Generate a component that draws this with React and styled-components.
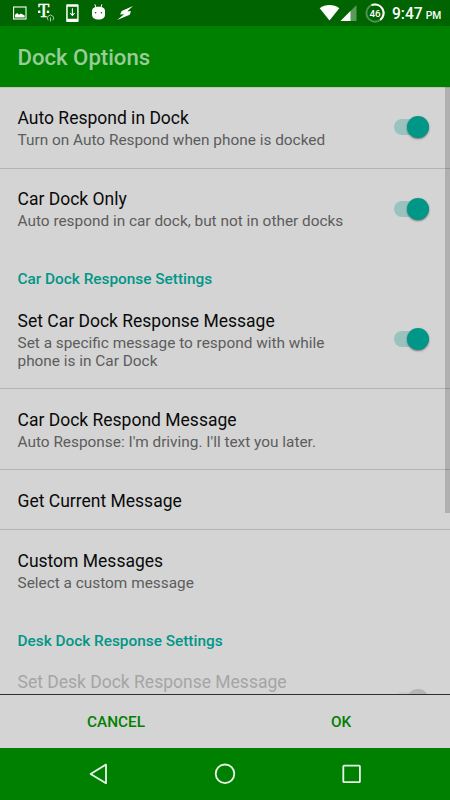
import React from 'react';
import styled, { createGlobalStyle } from 'styled-components';

const GlobalStyle = createGlobalStyle`
  * {
    box-sizing: border-box;
  }
  body {
    margin: 0;
    background: #d4d4d4;
    font-family: Roboto, 'Liberation Sans', sans-serif;
    overflow: hidden;
  }
`;

const Screen = styled.div`
  width: 450px;
  height: 800px;
  display: flex;
  flex-direction: column;
  overflow: hidden;
`;

const StatusBar = styled.header`
  height: 26px;
  flex: none;
  display: flex;
  justify-content: space-between;
  background: #006400;
  color: white;
  svg {
    display: block;
    flex: none;
  }
`;

const Clock = styled.div`
  width: 58px;
  font-size: 15.6px;
  font-weight: 500;
  line-height: 28px;
  white-space: nowrap;
  small {
    font-size: 10.3px;
    margin-left: 3px;
  }
`;

const StatusGroup = styled.div`
  display: flex;
`;

const TitleBar = styled.div`
  height: 61px;
  flex: none;
  padding-left: 17.5px;
  background: #008000;
  color: #99cc99;
  font-size: 22.15px;
  font-weight: 500;
  line-height: 63px;
`;

const ListArea = styled.main`
  position: relative;
  height: 607px;
  flex: none;
  overflow: hidden;
  background: #d4d4d4;
  box-shadow: inset 0 1px 0 #b9c6b9;
`;

const ScrollThumb = styled.div`
  position: absolute;
  top: 0;
  right: 0;
  width: 5px;
  height: 426px;
  background: rgba(0, 0, 0, 0.17);
`;

const Row = styled.div`
  display: flex;
  justify-content: space-between;
  height: ${(props) => props.$height}px;
  padding: ${(props) => props.$top}px 21px 0 17.5px;
  border-bottom: 1px solid ${(props) => (props.$divider ? '#b4b4b4' : 'transparent')};
`;

const RowTitle = styled.div`
  color: ${(props) => (props.$disabled ? '#a5a5a5' : '#0a0a0a')};
  font-size: 17.5px;
  line-height: 22px;
  white-space: nowrap;
`;

const Summary = styled.div`
  color: #5c5c5c;
  font-size: 15.38px;
  line-height: 18px;
  margin-top: 2px;
  white-space: pre;
`;

const Category = styled.h2`
  height: 40px;
  margin: 0;
  padding: ${(props) => props.$top}px 17.5px 0;
  color: #009688;
  font-size: 15.36px;
  font-weight: 500;
  line-height: 20px;
`;

const Track = styled.div`
  flex: none;
  display: flex;
  align-items: center;
  justify-content: flex-end;
  width: 35px;
  height: 16px;
  margin-top: ${(props) => props.$top}px;
  border-radius: 8px;
  background: ${(props) => (props.$disabled ? '#c9c9c9' : '#9ac3bf')};
`;

const Thumb = styled.div`
  flex: none;
  width: 22px;
  height: 22px;
  border-radius: 50%;
  background: ${(props) => (props.$disabled ? '#b5b5b5' : '#009688')};
  box-shadow: 0 1px 2px rgba(0, 0, 0, ${(props) => (props.$disabled ? 0 : 0.45)});
`;

const ButtonBar = styled.div`
  display: flex;
  height: 54px;
  flex: none;
  border-top: 1px solid #303030;
  background: #d4d4d4;
`;

const BarButton = styled.button`
  flex: 1;
  padding: 0 0 0 7px;
  border: 0;
  background: none;
  color: #008000;
  font-family: inherit;
  font-size: 15.3px;
  font-weight: 500;
`;

const NavBar = styled.nav`
  flex: 1;
  background: #008000;
  svg {
    display: block;
  }
`;

const Toggle = ({ top, disabled }) => (
  <Track $top={top} $disabled={disabled}>
    <Thumb $disabled={disabled} />
  </Track>
);

const Preference = ({ title, summary, height, top = 20, toggleTop, divider, disabled }) => (
  <Row $height={height} $top={top} $divider={divider}>
    <div>
      <RowTitle $disabled={disabled}>{title}</RowTitle>
      {summary && <Summary>{summary}</Summary>}
    </div>
    {toggleTop !== undefined && <Toggle top={toggleTop} disabled={disabled} />}
  </Row>
);

const NotificationIcons = () => (
  <svg width='145' height='26' viewBox='0 0 145 26' fill='white'>
    {/* picture */}
    <rect x='13.6' y='7' width='12.4' height='12' fill='none' stroke='white' strokeWidth='1.1' />
    <path d='M15 17.5v-2.8l2.2-1.7 1.8 1.7 1.8-1.2 3.9 2v2z' />
    {/* carrier */}
    <text
      x='38.3'
      y='16.8'
      fontFamily='Liberation Serif, serif'
      fontSize='18'
      stroke='white'
      strokeWidth='.5'
    >
      T
    </text>
    <rect x='38' y='10.6' width='2.4' height='2.4' />
    <rect x='46.8' y='10.6' width='2.4' height='2.4' />
    <g fill='none' stroke='#a9cda9' strokeWidth='1'>
      <path d='M48.2 20.3a3.1 3.1 0 1 1 4.6 0' />
      <path d='M50.5 17.3v4.2' />
    </g>
    {/* download to phone */}
    <path
      fillRule='evenodd'
      d='M67 4.2h10.8a.8.8 0 0 1 .8.8v16.2a.8.8 0 0 1-.8.8H67a.8.8 0 0 1-.8-.8V5a.8.8 0 0 1 .8-.8zM67.7 6.8v12h9.5v-12z'
    />
    <path d='M72.4 8.2v7M70.2 13l2.2 2.5 2.2-2.5' fill='none' stroke='white' strokeWidth='1.1' />
    {/* android head */}
    <path d='M94.9 4.3l1 3.2M101.9 4.3l-1 3.2' stroke='white' strokeWidth='1' />
    <path d='M92 10.8c0-2.7 2.8-4.1 6.5-4.1s6.5 1.4 6.5 4.1v3.7c0 3.2-2.4 5-6.5 5s-6.5-1.8-6.5-5z' />
    <circle cx='95.6' cy='12.8' r='.8' fill='#006400' />
    <circle cx='101.4' cy='12.8' r='.8' fill='#006400' />
    {/* bolt */}
    <path d='M133 6l-11.3 5-1.6 3.6 4-.3-7 5.7 12.6-5.3 1.3-3.5-3.6.1z' />
  </svg>
);

const SignalIcons = () => (
  <svg width='73' height='26' viewBox='319.5 0 73 26' fill='white'>
    <path d='M330 20.5L320.2 8.3c5.5-4.3 14.1-4.3 19.6 0z' />
    <path d='M357 5v16h-16z' opacity='.35' />
    <path d='M351 11v10h-10z' />
    <circle cx='375.6' cy='13' r='8.7' fill='none' stroke='#4f924f' strokeWidth='2' />
    <path d='M372 5.1a8.7 8.7 0 0 1 8.7 14.9' fill='none' stroke='white' strokeWidth='2' />
    <text x='375.6' y='16.6' textAnchor='middle' fontSize='9.8' fontWeight='500'>
      46
    </text>
  </svg>
);

const NavIcons = () => (
  <svg width='450' height='52' viewBox='0 748 450 52' fill='none' stroke='#e9f4e9' strokeWidth='1.8'>
    <path d='M106 764.6v18.6l-15.4-9.3z' strokeLinejoin='round' />
    <circle cx='225' cy='773.8' r='9.3' />
    <rect x='343.3' y='765.6' width='16.6' height='16.6' rx='.8' />
  </svg>
);

const App = () => {
  return (
    <Screen>
      <GlobalStyle />
      <StatusBar>
        <NotificationIcons />
        <StatusGroup>
          <SignalIcons />
          <Clock>
            9:47<small>PM</small>
          </Clock>
        </StatusGroup>
      </StatusBar>
      <TitleBar>Dock Options</TitleBar>
      <ListArea>
        <Preference
          title='Auto Respond in Dock'
          summary='Turn on Auto Respond when phone is docked'
          height={82}
          toggleTop={12}
          divider
        />
        <Preference
          title='Car Dock Only'
          summary='Auto respond in car dock, but not in other docks'
          height={81}
          top={19}
          toggleTop={13}
        />
        <Category $top={19}>Car Dock Response Settings</Category>
        <Preference
          title='Set Car Dock Response Message'
          summary={'Set a specific message to respond with while\nphone is in Car Dock'}
          height={99}
          toggleTop={21}
          divider
        />
        <Preference
          title='Car Dock Respond Message'
          summary={"Auto Response: I'm driving. I'll text you later."}
          height={81}
          divider
        />
        <Preference title='Get Current Message' height={60} divider />
        <Preference title='Custom Messages' summary='Select a custom message' height={81} />
        <Category $top={20}>Desk Dock Response Settings</Category>
        <Preference title='Set Desk Dock Response Message' height={99} toggleTop={21} disabled />
        <ScrollThumb />
      </ListArea>
      <ButtonBar>
        <BarButton>CANCEL</BarButton>
        <BarButton>OK</BarButton>
      </ButtonBar>
      <NavBar>
        <NavIcons />
      </NavBar>
    </Screen>
  );
};

export default App;
